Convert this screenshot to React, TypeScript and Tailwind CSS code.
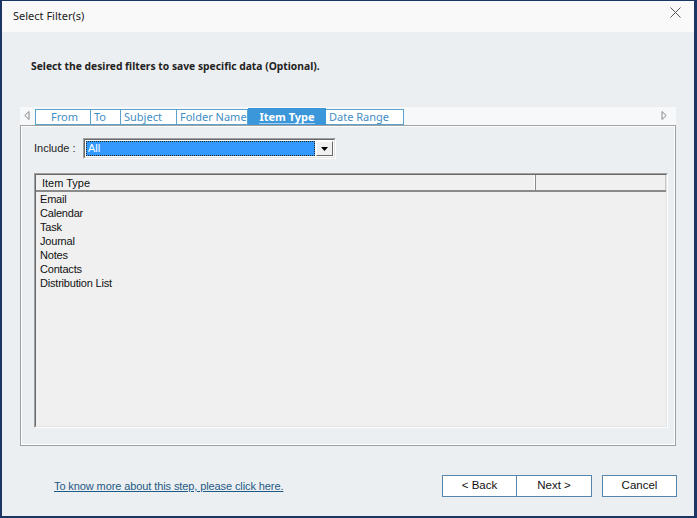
import React from "react";

const tabs = [
  { label: "From", w: "w-[56px]", pad: "pl-[15px]" },
  { label: "To", w: "w-[30px]", pad: "pl-[3px]" },
  { label: "Subject", w: "w-[56px]", pad: "pl-[3px]" },
  { label: "Folder Name", w: "w-[71px]", pad: "pl-[3px]" },
  { label: "Item Type", w: "w-[78px]", pad: "", active: true },
  { label: "Date Range", w: "w-[78px]", pad: "pl-[3px]" },
];

const items = ["Email", "Calendar", "Task", "Journal", "Notes", "Contacts", "Distribution List"];

export default function App() {
  return (
    <div className="w-[697px] h-[518px] border-t border-l-2 border-r-[3px] border-b-2 border-[#1b3564] flex flex-col overflow-hidden">
      {/* Title bar */}
      <div className="h-[31px] bg-[#f9f9f9] flex items-center justify-between pl-[11px] pr-[13px] shrink-0">
        <span className="text-[11px] text-[#222] font-['Noto_Sans',sans-serif]">Select Filter(s)</span>
        <svg width="11" height="11" viewBox="0 0 11 11" className="-mt-[8px]">
          <path d="M0.5 0.5L10.5 10.5M10.5 0.5L0.5 10.5" stroke="#555" strokeWidth="1" />
        </svg>
      </div>

      {/* Body */}
      <div className="flex-1 bg-[#eceff1] flex flex-col">
        <div className="pt-[27px] pl-[29px] h-[42px] text-[10.3px] leading-[15px] font-bold text-[#222] font-['Noto_Sans',sans-serif]">
          Select the desired filters to save specific data (Optional).
        </div>

        {/* Tab control */}
        <div className="ml-[18px] mt-[33px] w-[656px] flex flex-col">
          <div className="h-[18px] bg-[#f6f8f9] flex items-end relative">
            <svg width="6" height="9" viewBox="0 0 6 9" className="absolute left-[4px] top-[4px]">
              <path d="M5 0.5L0.8 4.5L5 8.5Z" fill="none" stroke="#888" strokeWidth="1" />
            </svg>
            <svg width="6" height="9" viewBox="0 0 6 9" className="absolute right-[9px] top-[4px]">
              <path d="M1 0.5L5.2 4.5L1 8.5Z" fill="none" stroke="#888" strokeWidth="1" />
            </svg>
            <div className="ml-[15px] flex items-end">
              {tabs.map((t, i) =>
                t.active ? (
                  <div
                    key={t.label}
                    className={`${t.w} h-[17px] bg-[#3b97d9] flex items-center justify-center text-[11px] font-bold text-white font-['Noto_Sans',sans-serif]`}
                  >
                    <span className="border-b border-[#a8d0ee] leading-[13px]">{t.label}</span>
                  </div>
                ) : (
                  <div
                    key={t.label}
                    className={`${t.w} ${t.pad} h-[16px] border-t border-b border-r ${i === 0 ? "border-l" : ""} border-[#5aa3cf] bg-white flex items-center text-[11px] text-[#3f8ec4] font-['Noto_Sans',sans-serif] whitespace-nowrap overflow-hidden`}
                  >
                    {t.label}
                  </div>
                )
              )}
            </div>
          </div>

          {/* Panel */}
          <div className="h-[321px] border border-[#a0a0a0] shadow-[inset_0_0_0_1px_#ffffff] bg-[#eceff1] flex flex-col pl-[13px] pr-[7px]">
            <div className="mt-[12px] flex items-center h-[21px]">
              <span className="w-[49px] text-[11px] text-[#222] font-['Liberation_Sans',sans-serif]">Include :</span>
              <div className="w-[253px] h-[21px] border-t border-l border-[#a0a0a0] border-r border-b border-r-white border-b-white flex">
                <div className="flex-1 border-t border-l border-[#696969] border-r border-b border-r-[#e3e3e3] border-b-[#e3e3e3] bg-white flex p-[1px]">
                  <div className="flex-1 bg-[#3399ff] outline outline-1 outline-dotted outline-[#222] -outline-offset-1 text-white text-[11px] leading-[15px] pl-[2px] font-['Liberation_Sans',sans-serif]">
                    All
                  </div>
                  <div className="w-[17px] ml-[1px] bg-[#f0f0f0] border border-t-white border-l-white border-r-[#696969] border-b-[#696969] flex items-center justify-center">
                    <svg width="7" height="4" viewBox="0 0 7 4">
                      <path d="M0 0H7L3.5 4Z" fill="#000" />
                    </svg>
                  </div>
                </div>
              </div>
            </div>

            {/* List view */}
            <div className="mt-[14px] w-[634px] h-[255px] border-t border-l border-[#a0a0a0] border-r border-b border-r-white border-b-white flex flex-col">
              <div className="flex-1 border-t border-l border-[#696969] border-r border-b border-r-[#e3e3e3] border-b-[#e3e3e3] bg-[#f0f0f0] flex flex-col">
                <div className="h-[17px] flex border-b-2 border-[#8a8a8a] bg-[#f0f0f0] shrink-0">
                  <div className="w-[500px] border-r border-[#8a8a8a] shadow-[inset_-1px_0_0_#fff] pl-[6px] text-[11px] leading-[16px] text-[#111] font-['Liberation_Sans',sans-serif]">
                    Item Type
                  </div>
                  <div className="w-[130px] border-r border-[#c8c8c8]" />
                </div>
                <div className="flex flex-col">
                  {items.map((it) => (
                    <div
                      key={it}
                      className="h-[14px] pl-[4px] text-[11px] leading-[14px] tracking-[-0.2px] text-[#111] font-['Liberation_Sans',sans-serif]"
                    >
                      {it}
                    </div>
                  ))}
                </div>
              </div>
            </div>
          </div>
        </div>

        {/* Footer */}
        <div className="mt-[29px] h-[22px] flex items-center pl-[52px] pr-[17px]">
          <a className="text-[11px] tracking-[-0.1px] text-[#1e5a86] underline font-['Liberation_Sans',sans-serif] cursor-pointer">
            To know more about this step, please click here.
          </a>
          <div className="flex-1" />
          <button className="w-[75px] h-[22px] bg-white border border-[#5585ad] text-[11.5px] text-[#111] font-['Liberation_Sans',sans-serif]">
            &lt; Back
          </button>
          <button className="w-[75px] h-[22px] bg-white border border-l-0 border-[#5585ad] text-[11.5px] text-[#111] font-['Liberation_Sans',sans-serif]">
            Next &gt;
          </button>
          <button className="ml-[10px] w-[75px] h-[22px] bg-white border border-[#5585ad] text-[11.5px] text-[#111] font-['Liberation_Sans',sans-serif]">
            Cancel
          </button>
        </div>
      </div>
    </div>
  );
}
